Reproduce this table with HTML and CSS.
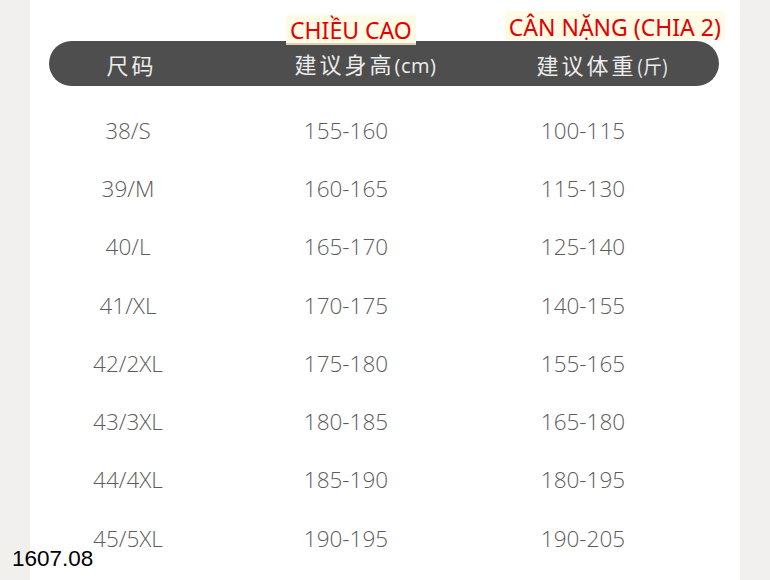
FILE: index.html
```html
<!DOCTYPE html>
<html>
<head>
<meta charset="utf-8">
<link rel="stylesheet" href="styles.css">
</head>
<body>
<div class="page">
  <div class="strip"></div>
  <div class="panel">
    <div class="labels">
      <span class="label label-h">CHIỀU CAO</span>
      <span class="label label-w">CÂN NẶNG (CHIA 2)</span>
    </div>
    <div class="bar">
      <div class="hc hc1">尺码</div>
      <div class="hc hc2">建议身高<span class="unit">(cm)</span></div>
      <div class="hc hc3">建议体重<span class="unit unit-cjk">(斤)</span></div>
    </div>
    <div class="rows">
      <div class="row"><div class="c1">38/S</div><div class="c2">155-160</div><div class="c3">100-115</div></div>
      <div class="row"><div class="c1">39/M</div><div class="c2">160-165</div><div class="c3">115-130</div></div>
      <div class="row"><div class="c1">40/L</div><div class="c2">165-170</div><div class="c3">125-140</div></div>
      <div class="row"><div class="c1">41/XL</div><div class="c2">170-175</div><div class="c3">140-155</div></div>
      <div class="row"><div class="c1">42/2XL</div><div class="c2">175-180</div><div class="c3">155-165</div></div>
      <div class="row"><div class="c1">43/3XL</div><div class="c2">180-185</div><div class="c3">165-180</div></div>
      <div class="row"><div class="c1">44/4XL</div><div class="c2">185-190</div><div class="c3">180-195</div></div>
      <div class="row"><div class="c1">45/5XL</div><div class="c2">190-195</div><div class="c3">190-205</div></div>
    </div>
  </div>
  <div class="strip"></div>
</div>
<div class="stamp">1607.08</div>
</body>
</html>
```

FILE: styles.css
```css
html, body {
  margin: 0;
  padding: 0;
  background: #f1f0ee;
}
.page {
  display: flex;
  width: 770px;
  height: 580px;
  overflow: hidden;
}
.strip {
  width: 30px;
  flex: 0 0 30px;
  background: #f1f0ee;
}
.panel {
  width: 710px;
  flex: 0 0 710px;
  background: #ffffff;
  padding: 11px 0 0 19px;
  box-sizing: border-box;
}
.labels {
  display: flex;
  height: 30px;
  position: relative;
  z-index: 1;
}
.label {
  display: block;
  background: #fffbe4;
  color: #e30000;
  font-family: "Noto Sans", sans-serif;
  font-size: 23px;
  line-height: 30px;
  padding: 0 4px;
  white-space: nowrap;
}
.label-h {
  margin-left: 237px;
  margin-top: 4px;
  height: 28px;
  border-bottom: 2px solid #d9d2b8;
}
.label-w {
  margin-left: 89px;
  height: 29px;
  line-height: 33px;
}
.bar {
  display: grid;
  grid-template-columns: 162px 306px 168px;
  align-items: center;
  width: 670px;
  height: 45px;
  border-radius: 23px;
  background: #4e4e4e;
  color: #ececec;
  font-family: "Noto Sans CJK SC", sans-serif;
  font-size: 22px;
}
.hc {
  text-align: center;
  letter-spacing: 3px;
  line-height: 45px;
  padding-left: 3px;
}
.unit {
  font-family: "Open Sans", sans-serif;
  font-size: 20px;
  letter-spacing: 0.5px;
}
.unit-cjk {
  font-family: "Noto Sans CJK SC", sans-serif;
  font-size: 19px;
  letter-spacing: 0;
}
.rows {
  padding-top: 15px;
}
.row {
  display: grid;
  grid-template-columns: 158px 278px 196px;
  height: 58.3px;
  align-items: center;
  color: #5c5c5c;
  font-family: "Open Sans", sans-serif;
  font-weight: 300;
  font-size: 22.5px;
}
.row > div {
  text-align: center;
}
.stamp {
  position: absolute;
  left: 12px;
  top: 545px;
  font-family: "Liberation Sans", Arial, sans-serif;
  font-size: 22.5px;
  color: #000;
  line-height: 28px;
}
```
